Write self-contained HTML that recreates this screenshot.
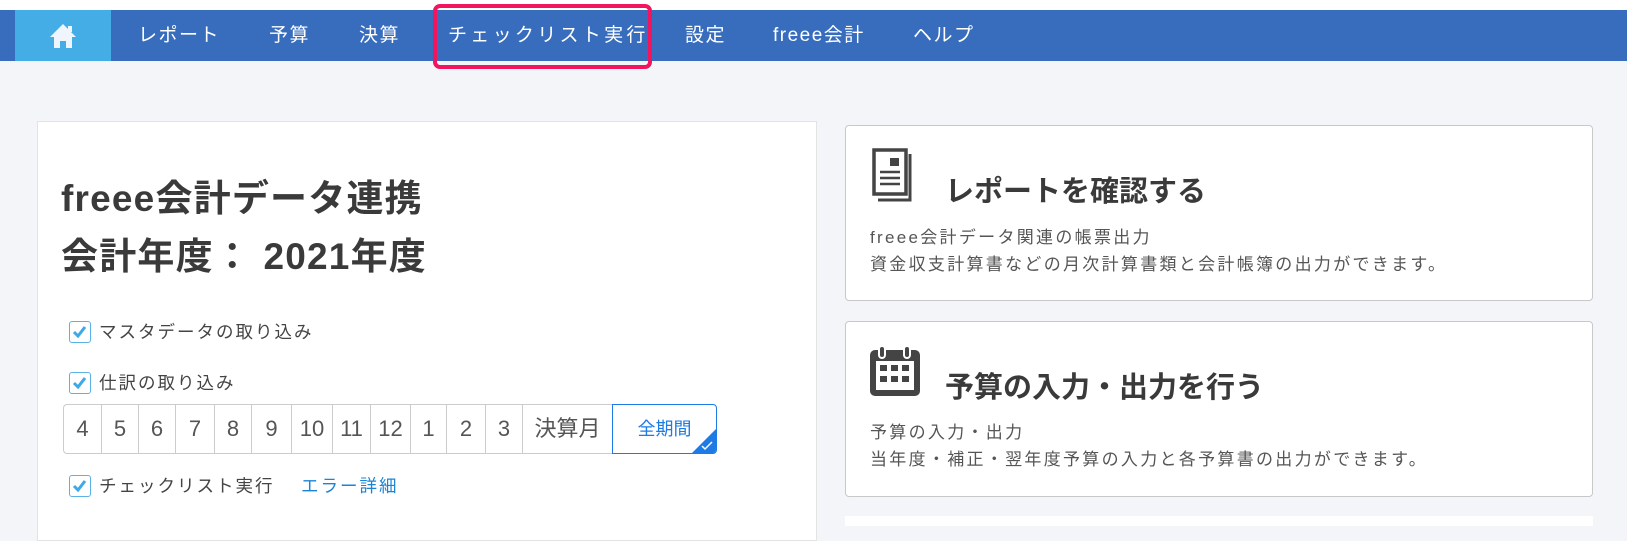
<!DOCTYPE html>
<html><head><meta charset="utf-8"><style>
*{box-sizing:border-box;margin:0;padding:0}
body{width:1627px;height:522px;overflow:hidden;background:#f4f5f9;font-family:"Liberation Sans","Noto Sans CJK JP",sans-serif;position:relative}
.top{position:absolute;left:0;top:0;width:1627px;height:10px;background:#fff}
.nav{position:absolute;left:0;top:10px;width:1627px;height:51px;background:#386dbe}
.home{position:absolute;left:15px;top:0;width:96px;height:51px;background:#45ade6}
.ni{position:absolute;top:0;line-height:51px;color:#fff;font-size:19px;letter-spacing:1.5px}
.red{position:absolute;left:433px;top:4px;width:219px;height:65px;border:4px solid #f3145e;border-radius:7px}
.left{position:absolute;left:37px;top:121px;width:780px;height:420px;background:#fff;border:1px solid #e3e3e3}
.h{position:absolute;left:61px;font-size:37px;font-weight:bold;color:#3a3a3a;line-height:42px;letter-spacing:1.2px}
.cb{position:absolute;left:69px;width:22px;height:22px;border:1.5px solid #5ab2e6;border-radius:3px;background:#fff}
.cbl{position:absolute;left:99px;font-size:17.5px;color:#444;line-height:24px;letter-spacing:2px}
.m{position:absolute;top:404px;height:50px;border:1px solid #ccc;border-right:none;background:#fff;text-align:center;line-height:48px;font-size:22px;color:#555}
.card{position:absolute;left:845px;width:748px;height:176px;background:#fff;border:1px solid #c8c8c8;border-radius:4px}
.ct{position:absolute;left:99px;font-size:29px;font-weight:bold;color:#3a3a3a}
.cd{position:absolute;left:24px;font-size:17px;color:#555;line-height:27px;letter-spacing:2.3px}
</style></head><body>
<div class="top"></div>
<div class="nav">
<div class="home"><svg width="96" height="51"><path d="M48 14 L35 27 H39 V38 H45 V31 H51 V38 H57 V27 H61 Z" fill="#eef5fd"/><rect x="53" y="16" width="4" height="6" fill="#eef5fd"/></svg></div>
<div class="ni" style="left:138px">レポート</div>
<div class="ni" style="left:269px">予算</div>
<div class="ni" style="left:359px">決算</div>
<div class="ni" style="left:448px;letter-spacing:3.3px">チェックリスト実行</div>
<div class="ni" style="left:685px">設定</div>
<div class="ni" style="left:773px">freee会計</div>
<div class="ni" style="left:913px">ヘルプ</div>
</div>
<div class="red"></div>
<div class="left"></div>
<div class="h" style="top:178px">freee会計データ連携</div>
<div class="h" style="top:236px">会計年度： 2021年度</div>
<div class="cb" style="top:321px"><svg width="19" height="19"><path d="M4 10 L8 14 L15 5" stroke="#3fa8e6" stroke-width="3" fill="none"/></svg></div>
<div class="cbl" style="top:320px">マスタデータの取り込み</div>
<div class="cb" style="top:372px"><svg width="19" height="19"><path d="M4 10 L8 14 L15 5" stroke="#3fa8e6" stroke-width="3" fill="none"/></svg></div>
<div class="cbl" style="top:371px">仕訳の取り込み</div>
<div class="m" style="left:63px;width:38px;border-radius:4px 0 0 4px">4</div>
<div class="m" style="left:101px;width:37px">5</div>
<div class="m" style="left:138px;width:37px">6</div>
<div class="m" style="left:175px;width:39px">7</div>
<div class="m" style="left:214px;width:37px">8</div>
<div class="m" style="left:251px;width:40px">9</div>
<div class="m" style="left:291px;width:41px">10</div>
<div class="m" style="left:332px;width:38px">11</div>
<div class="m" style="left:370px;width:40px">12</div>
<div class="m" style="left:410px;width:36px">1</div>
<div class="m" style="left:446px;width:39px">2</div>
<div class="m" style="left:485px;width:37px">3</div>
<div class="m" style="left:522px;width:90px">決算月</div>
<div class="m" style="left:612px;width:105px;border:1.5px solid #1d7be6;border-radius:0 4px 4px 0;color:#1d7be6;font-size:18px;overflow:hidden">全期間<svg style="position:absolute;right:0;bottom:0" width="24" height="24"><path d="M24 0 V24 H0 Z" fill="#1d7be6"/><path d="M10 17 L13 20 L20 13" stroke="#fff" stroke-width="1.5" fill="none"/></svg></div>
<div class="cb" style="top:475px"><svg width="19" height="19"><path d="M4 10 L8 14 L15 5" stroke="#3fa8e6" stroke-width="3" fill="none"/></svg></div>
<div class="cbl" style="top:474px">チェックリスト実行<span style="color:#1a84d6;position:absolute;left:202px;white-space:nowrap">エラー詳細</span></div>

<div class="card" style="top:125px">
<svg style="position:absolute;left:24px;top:22px" width="46" height="56"><path d="M4 2 H36 V46 H4 Z" fill="none" stroke="#444" stroke-width="3.5"/><path d="M40 6 V52 H8" fill="none" stroke="#444" stroke-width="3"/><rect x="20" y="10" width="9" height="8" fill="#444"/><path d="M10 24 H30 M10 30 H30 M10 36 H30" stroke="#444" stroke-width="2.5"/></svg>
<div class="ct" style="top:42px">レポートを確認する</div>
<div class="cd" style="top:98px">freee会計データ関連の帳票出力<br>資金収支計算書などの月次計算書類と会計帳簿の出力ができます。</div>
</div>
<div class="card" style="top:321px">
<svg style="position:absolute;left:23px;top:22px" width="52" height="54"><rect x="1" y="6" width="50" height="46" rx="5" fill="#444"/><rect x="7" y="17" width="38" height="29" fill="#fff"/><rect x="10" y="2" width="6" height="12" rx="3" fill="#444" stroke="#fff" stroke-width="2"/><rect x="35" y="2" width="6" height="12" rx="3" fill="#444" stroke="#fff" stroke-width="2"/><g fill="#444"><rect x="11" y="21" width="7" height="6"/><rect x="22" y="21" width="7" height="6"/><rect x="33" y="21" width="7" height="6"/><rect x="11" y="32" width="7" height="6"/><rect x="22" y="32" width="7" height="6"/><rect x="33" y="32" width="7" height="6"/></g></svg>
<div class="ct" style="top:42px">予算の入力・出力を行う</div>
<div class="cd" style="top:97px">予算の入力・出力<br>当年度・補正・翌年度予算の入力と各予算書の出力ができます。</div>
</div>
<div style="position:absolute;left:845px;top:516px;width:748px;height:10px;background:#fff"></div>
</body></html>
